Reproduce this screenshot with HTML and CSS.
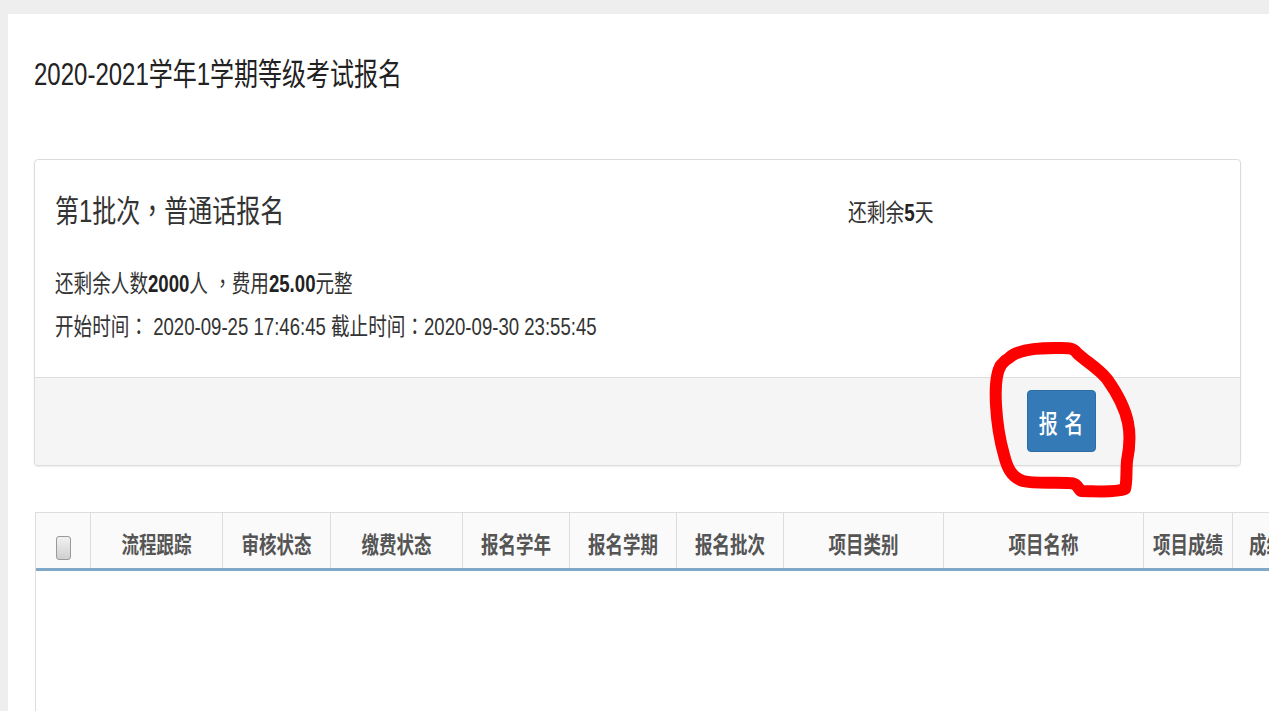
FILE: index.html
```html
<!DOCTYPE html>
<html lang="zh-CN">
<head>
<meta charset="utf-8">
<title>等级考试报名</title>
<link rel="stylesheet" href="styles.css">
</head>
<body>
<div class="page">
  <h1 class="title"><span class="tall">2020-2021学年1学期等级考试报名</span></h1>

  <div class="panel">
    <div class="panel-body">
      <div class="panel-head">
        <div class="batch"><span class="tall">第1批次<span class="punct" lang="zh-TW">，</span>普通话报名</span></div>
        <div class="remain"><span class="tall">还剩余<b>5</b>天</span></div>
      </div>
      <div class="info"><span class="tall">还剩余人数<b>2000</b>人 <span class="punct" lang="zh-TW">，</span>费用<b>25.00</b>元整</span></div>
      <div class="info"><span class="tall">开始时间<span class="punct" lang="zh-TW">：</span> 2020-09-25 17:46:45 截止时间<span class="punct" lang="zh-TW">：</span>2020-09-30 23:55:45</span></div>
    </div>
    <div class="panel-foot">
      <button class="btn"><span class="tall">报 名</span></button>
    </div>
  </div>

  <div class="table-wrap">
    <div class="thead">
      <div class="th c0"><span class="chk"></span></div>
      <div class="th c1"><span class="tall">流程跟踪</span></div>
      <div class="th c2"><span class="tall">审核状态</span></div>
      <div class="th c3"><span class="tall">缴费状态</span></div>
      <div class="th c4"><span class="tall">报名学年</span></div>
      <div class="th c5"><span class="tall">报名学期</span></div>
      <div class="th c6"><span class="tall">报名批次</span></div>
      <div class="th c7"><span class="tall">项目类别</span></div>
      <div class="th c8"><span class="tall">项目名称</span></div>
      <div class="th c9"><span class="tall">项目成绩</span></div>
      <div class="th c10"><span class="tall">成绩状态</span></div>
    </div>
    <div class="tbody"></div>
  </div>

  <svg class="mark" width="170" height="175" viewBox="0 0 170 175" aria-hidden="true">
    <path d="M24 22 C32 14 50 12 70 12 C82 12 88 11 92 17 C100 25 112 31 122 43 C132 57 140 71 143 87 C146 101 144 115 142 125 C141 137 142 147 140 153 C130 157 110 155 96 155 C92 151 92 147 84 147 C70 146 50 148 38 145 C26 141 22 131 19 119 C15 105 12 87 11 69 C10 51 11 37 16 29 C19 25 22 23 24 22 Z" fill="none" stroke="#ff0000" stroke-width="12" stroke-linejoin="round" stroke-linecap="round"/>
  </svg>
</div>
</body>
</html>
```
FILE: styles.css
```css
* { box-sizing: border-box; }
html, body { margin: 0; padding: 0; }
body {
  background: #eeeeee;
  font-family: "Liberation Sans", "Noto Sans CJK SC", sans-serif;
  color: #333;
  overflow: hidden;
  width: 1269px;
  height: 711px;
}
.page {
  position: relative;
  margin: 14px 0 0 8px;
  background: #fff;
  height: 697px;
  overflow: hidden;
  padding: 0 0 0 26px;
}
.tall { display: inline-block; transform: scaleY(1.3); }
.punct { font-family: "Noto Sans CJK TC", sans-serif; }
.title {
  margin: 0;
  padding-top: 45px;
  height: 145px;
  font-size: 24px;
  font-weight: normal;
  line-height: 32px;
  color: #222;
}
.panel {
  width: 1207px;
  border: 1px solid #dcdcdc;
  border-radius: 4px;
  box-shadow: 0 1px 2px rgba(0,0,0,0.08);
  background: #fff;
}
.panel-body {
  height: 217px;
  padding: 31px 20px 0 20px;
}
.panel-head {
  display: grid;
  grid-template-columns: 793px 1fr;
  align-items: center;
  height: 30px;
  margin-bottom: 40px;
}
.batch { font-size: 24px; color: #333; }
.remain { font-size: 18.8px; color: #333; padding-top: 2px; }
.info {
  font-size: 18.6px;
  line-height: 41px;
  color: #333;
  white-space: nowrap;
}
.info b, .remain b { font-weight: bold; color: #222; }
.panel-foot {
  height: 88px;
  background: #f5f5f5;
  border-top: 1px solid #dddddd;
  display: flex;
  justify-content: flex-end;
  align-items: flex-start;
  padding: 12px 144px 0 0;
  border-radius: 0 0 4px 4px;
}
.btn {
  width: 69px;
  height: 62px;
  background: #337ab7;
  border: 1px solid #2e6da4;
  border-radius: 4px;
  color: #fff;
  font-family: "Noto Sans CJK SC", sans-serif;
  font-size: 19px;
  font-weight: 500;
  letter-spacing: 1px;
  padding: 0;
}
.table-wrap {
  margin-top: 46px;
  margin-left: 1px;
  width: 1400px;
  border-left: 1px solid #dddddd;
  border-top: 1px solid #dddddd;
}
.thead {
  display: flex;
  height: 58px;
  background: #fafafa;
  border-bottom: 3px solid #7fa8c9;
}
.th {
  flex: none;
  display: flex;
  align-items: center;
  justify-content: center;
  border-right: 1px solid #dddddd;
  font-family: "Noto Sans CJK SC", sans-serif;
  font-weight: bold;
  font-size: 17.5px;
  color: #555;
  padding-top: 6px;
}
.c0 { width: 55px; padding-top: 14px; }
.c1 { width: 132px; }
.c2 { width: 108px; }
.c3 { width: 132px; }
.c4 { width: 107px; }
.c5 { width: 107px; }
.c6 { width: 107px; }
.c7 { width: 160px; }
.c8 { width: 200px; }
.c9 { width: 89px; }
.c10 { width: 100px; justify-content: flex-start; padding-left: 16px; }
.chk {
  display: block;
  width: 15px;
  height: 24px;
  border: 1px solid #9a9a9a;
  border-radius: 3px;
  background: linear-gradient(#f2f2f2, #cfcfcf);
}
.tbody { height: 200px; background: #fff; }
.mark {
  position: absolute;
  left: 977px;
  top: 322px;
}
```
